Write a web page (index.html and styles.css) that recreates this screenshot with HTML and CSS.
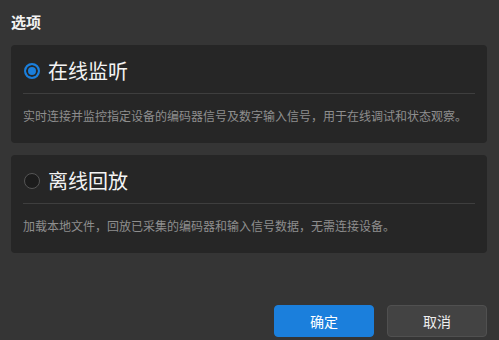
FILE: index.html
```html
<!DOCTYPE html>
<html lang="zh-CN">

<head>
    <meta charset="UTF-8">
    <meta name="viewport" content="width=device-width, initial-scale=1.0">
    <title>选项</title>
    <link rel="stylesheet" href="styles.css">
</head>

<body>
    <div class="dialog">
        <h2 class="dialog-title">选项</h2>

        <!-- Mode options -->
        <label class="option">
            <div class="option-head">
                <input type="radio" name="mode" value="online" checked>
                <span class="option-name">在线监听</span>
            </div>
            <p class="option-desc">实时连接并监控指定设备的编码器信号及数字输入信号，用于在线调试和状态观察。</p>
        </label>

        <label class="option">
            <div class="option-head">
                <input type="radio" name="mode" value="offline">
                <span class="option-name">离线回放</span>
            </div>
            <p class="option-desc">加载本地文件，回放已采集的编码器和输入信号数据，无需连接设备。</p>
        </label>

        <!-- Footer buttons -->
        <div class="dialog-actions">
            <button class="btn btn-primary">确定</button>
            <button class="btn">取消</button>
        </div>
    </div>
</body>

</html>
```

FILE: styles.css
```css
body {
    margin: 0;
    padding: 0;
    background-color: #353535;
    font-family: "Noto Sans CJK SC", "Noto Sans", sans-serif;
    color: #e8e8e8;
}

.dialog {
    height: 340px;
    box-sizing: border-box;
    padding: 10px 12px 3px 11px;
    display: flex;
    flex-direction: column;
}

.dialog-title {
    margin: 0 0 11px;
    font-size: 15px;
    line-height: 24px;
    font-weight: bold;
    color: #f2f2f2;
}

.option {
    display: block;
    background-color: #262626;
    border-radius: 4px;
    padding: 0 12px;
    margin-bottom: 12px;
    cursor: pointer;
}

.option-head {
    display: flex;
    align-items: center;
    gap: 8px;
    padding: 13px 0 9px;
    border-bottom: 1px solid #3e3e3e;
}

.option-head input {
    appearance: none;
    margin: 0 0 0 1px;
    width: 16px;
    height: 16px;
    border-radius: 50%;
    border: 1px solid #555;
    background-color: #1c1c1c;
    box-sizing: border-box;
}

.option-head input:checked {
    border: 2px solid #1b7fdc;
    background-color: #1b7fdc;
    box-shadow: inset 0 0 0 2px #262626;
}

.option-name {
    font-size: 20px;
    line-height: 26px;
    color: #f4f4f4;
}

.option-desc {
    margin: 0;
    padding: 13px 0 18px;
    font-size: 12px;
    line-height: 18px;
    color: #8e8e8e;
}

.dialog-actions {
    margin-top: auto;
    display: flex;
    justify-content: flex-end;
    gap: 13px;
}

.btn {
    width: 100px;
    height: 32px;
    border-radius: 4px;
    border: 1px solid #505050;
    background-color: #434343;
    color: #eeeeee;
    font-family: inherit;
    font-size: 14px;
}

.btn-primary {
    background-color: #1b7fdc;
    border-color: #1b7fdc;
    color: #fff;
}
```
